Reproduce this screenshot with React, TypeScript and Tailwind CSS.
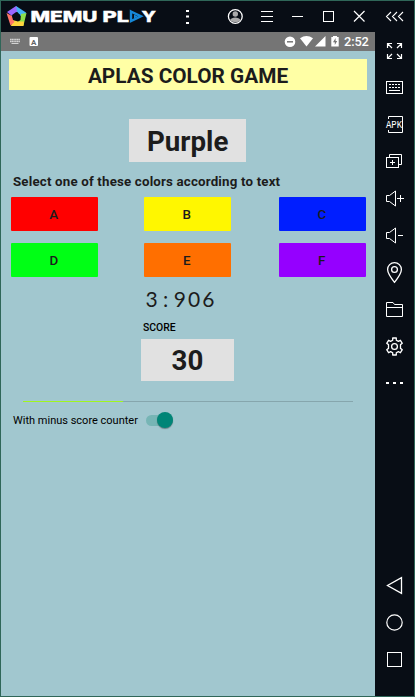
import type { ReactNode } from 'react';

const tools: { name: string; art: ReactNode }[] = [
  {
    name: 'Full screen',
    art: (
      <path
        strokeWidth="1.2"
        d="M12.5 16V11.5H17M12.5 11.5L17 16M22 11.5H26.5V16M26.5 11.5L22 16M12.5 22V26.5H17M12.5 26.5L17 22M22 26.5H26.5V22M26.5 26.5L22 22"
      />
    ),
  },
  {
    name: 'Keyboard',
    art: (
      <>
        <rect x="11.5" y="12.5" width="16" height="12" />
        <path d="M14 15.5H26M14 18.5H26" strokeDasharray="2 1" />
        <path d="M14 21.5H25" />
      </>
    ),
  },
  {
    name: 'Install APK',
    art: (
      <>
        <path d="M13.5 13V10.5H27.5V26.5H13.5V24" />
        <text x="11" y="22" textLength="16" lengthAdjust="spacingAndGlyphs" fill="#fff" stroke="none" fontSize="10.5" fontFamily="Liberation Mono, monospace">
          APK
        </text>
      </>
    ),
  },
  {
    name: 'Instances',
    art: (
      <>
        <path d="M14.5 14V11.5H26.5V21.5H24" />
        <rect x="11.5" y="14.5" width="12" height="10" />
        <path d="M15 19.5H20M17.5 17V22" />
      </>
    ),
  },
  { name: 'Volume up', art: <path d="M11.5 15.5H14.5L20.5 11V26L14.5 21.5H11.5ZM22 18.5H29M25.5 15V22" /> },
  { name: 'Volume down', art: <path d="M11.5 15.5H14.5L20.5 11V26L14.5 21.5H11.5ZM23 18.5H28" /> },
  {
    name: 'Location',
    art: (
      <>
        <path strokeWidth="1.3" d="M19.5 28.3C16.5 24.5 12.6 19.5 12.6 15.5A6.9 6.9 0 0 1 26.4 15.5C26.4 19.5 22.5 24.5 19.5 28.3Z" />
        <circle cx="19.5" cy="15.5" r="2.9" strokeWidth="1.3" />
      </>
    ),
  },
  { name: 'Shared folder', art: <path d="M11.5 25.5V11.5H18L19.5 13.5H27.5V25.5ZM11.5 16.5H27.5" /> },
  {
    name: 'Settings',
    art: (
      <>
        <path
          strokeWidth="1.3"
          strokeLinejoin="round"
          d="M17.700 10H21.300V12.200L23.400 13.400L25.400 12.300L27.300 15.300L25.500 16.600V20.400L27.300 21.700L25.400 24.700L23.400 23.600L21.300 24.800V27H17.700V24.800L15.600 23.600L13.600 24.700L11.700 21.700L13.500 20.400V16.600L11.700 15.300L13.600 12.300L15.600 13.400L17.700 12.200Z"
        />
        <circle cx="19.5" cy="18.5" r="2.9" strokeWidth="1.3" />
      </>
    ),
  },
  { name: 'More', art: <path strokeWidth="2" d="M11 18H14M18 18H21M25 18H28" /> },
];

const navigation: { name: string; art: ReactNode }[] = [
  { name: 'Back', art: <path strokeWidth="1.3" d="M26.5 10.7V26.3L12.5 18.5Z" /> },
  { name: 'Home', art: <circle cx="19.5" cy="18.5" r="7.7" strokeWidth="1.2" /> },
  { name: 'Recents', art: <rect x="12.5" y="11.5" width="14" height="14" /> },
];

const answers = [
  { label: 'A', color: 'bg-[#ff0000]' },
  { label: 'B', color: 'bg-[#fff700]' },
  { label: 'C', color: 'bg-[#001eff]' },
  { label: 'D', color: 'bg-[#00ff15]' },
  { label: 'E', color: 'bg-[#ff6f00]' },
  { label: 'F', color: 'bg-[#9500ff]' },
];

function ToolButton({ name, art }: { name: string; art: ReactNode }) {
  return (
    <button aria-label={name} className="block h-[37px] w-[39px]">
      <svg width="39" height="37" fill="none" stroke="#fff" strokeWidth="1">
        {art}
      </svg>
    </button>
  );
}

function WindowButton({ name, children }: { name: string; children: ReactNode }) {
  return (
    <button aria-label={name} className="h-[31px] w-[31px]">
      <svg width="31" height="31" fill="none" stroke="#fff" strokeWidth="1">
        {children}
      </svg>
    </button>
  );
}

function TitleBar() {
  return (
    <header className="flex h-[31px] shrink-0 bg-[#080d15]">
      <svg width="219" height="31" viewBox="1 1 219 31" className="shrink-0">
        <path d="M16 6L7 12L12 16L17 12L22 12Z" fill="#9b66ff" />
        <path d="M16 6L26 12.5L24.5 17L20.5 16L17 11.5Z" fill="#45b3f5" />
        <path d="M26.5 13L23.5 25.5L17 22.5L20.5 20L21 14Z" fill="#8be04a" />
        <path d="M23.5 26H11L12.5 20L18 21.5L24 21.5Z" fill="#ffd43e" />
        <path d="M10.5 25.5L6.5 13L12 16L13 20L14.5 22Z" fill="#ff7468" />
        <path d="M16.2 12L20.4 15L18.8 20H13.6L12 15Z" fill="#080d15" />
        <g fill="#fff" stroke="#fff" strokeWidth="0.4" fontFamily="Inter, sans-serif" fontWeight="800" fontSize="14.5">
          <text x="30.4" y="21.8" textLength="67" lengthAdjust="spacingAndGlyphs">MEMU</text>
          <text x="102.5" y="21.8" textLength="26.5" lengthAdjust="spacingAndGlyphs">PL</text>
          <text x="141.5" y="21.8" textLength="14.5" lengthAdjust="spacingAndGlyphs">Y</text>
        </g>
        <path d="M131 11.5L141 16.3L131 21.2Z" fill="#080d15" stroke="#1688d8" strokeWidth="2.4" />
        <path d="M134 14.5L138 16.4L134 18.5Z" fill="#1688d8" />
        <path d="M186 11H189M186 16.5H189M186 23H189" stroke="#fff" strokeWidth="2" />
      </svg>
      <WindowButton name="Account">
        <circle cx="15.3" cy="15.5" r="6.9" strokeWidth="1.3" />
        <circle cx="15.3" cy="13" r="2.7" fill="#aaa" stroke="none" />
        <path d="M10 19C11.5 15.5 19 15.5 20.6 19C18.5 22 12.5 22 10 19Z" fill="#aaa" stroke="none" />
      </WindowButton>
      <WindowButton name="Menu">
        <path d="M10 10.5H22M10 15.5H22M10 20.5H22" />
      </WindowButton>
      <WindowButton name="Minimize">
        <path d="M10 15.5H21" />
      </WindowButton>
      <WindowButton name="Maximize">
        <rect x="10.5" y="10.5" width="10" height="10" />
      </WindowButton>
      <WindowButton name="Close">
        <path d="M10 10L20.5 20.5M20.5 10L10 20.5" strokeWidth="1.2" />
      </WindowButton>
      <button aria-label="Collapse" className="h-[31px] w-[39px]">
        <svg width="39" height="31" fill="none" stroke="#fff" strokeWidth="1.1">
          <path d="M16 11L11.5 15.5L16 20M22 11L17.5 15.5L22 20M28 11L23.5 15.5L28 20" />
        </svg>
      </button>
    </header>
  );
}

function StatusBar() {
  return (
    <div className="flex h-[19px] shrink-0 items-center bg-[#757575]">
      <svg width="343" height="19" viewBox="1 32 343 19" className="shrink-0">
        <path d="M10 39.5H20M10 41.5H20" stroke="#d4d4d4" strokeWidth="1.5" strokeDasharray="1.4 .3" />
        <path d="M11.5 43.5H18.5" stroke="#d4d4d4" />
        <rect x="29.5" y="37" width="8.5" height="9" rx="1" fill="#fff" />
        <text x="31" y="44.5" fontFamily="Roboto, sans-serif" fontWeight="700" fontSize="8" fill="#666">A</text>
        <circle cx="290" cy="41.8" r="5.3" fill="#fff" />
        <path d="M287 41.8H293" stroke="#757575" strokeWidth="1.5" />
        <path d="M300 38.3Q306.500 33.800 313 38.300L306.500 46.500Z" fill="#fff" />
        <path d="M325.500 36V46.500H315Z" fill="#fff" />
        <path d="M331.300 37H333V36H337V37H338.700V46.500H331.300Z" fill="#fff" />
        <path d="M335.600 38L333 42.200H334.800V45L337.200 41H335.600Z" fill="#757575" />
      </svg>
      <span className="pt-px text-[12.8px] leading-none font-medium tracking-[-0.1px] text-white">2:52</span>
    </div>
  );
}

export default function App() {
  return (
    <div className="flex h-[697px] w-[415px] flex-col overflow-hidden border border-[#2f6658] font-['Roboto',sans-serif] text-[#1c1c1c]">
      <TitleBar />
      <div className="flex min-h-0 flex-1">
        <div className="flex w-[374px] shrink-0 flex-col bg-[#a1c7cf]">
          <StatusBar />
          <main className="flex flex-col">
            <h1 className="mt-[8px] ml-[8px] flex h-[31px] w-[358px] items-center justify-center bg-[#ffffa5] pt-[3px] text-[20.8px] leading-none font-bold whitespace-nowrap">
              APLAS COLOR GAME
            </h1>
            <div className="mt-[29px] ml-[128.4px] flex h-[43px] w-[116.6px] items-center justify-center bg-[#e1e1e1] pt-[2px] text-[27.7px] leading-none font-bold">
              Purple
            </div>
            <p className="mt-[12px] ml-[12px] h-[16px] text-[13.3px] leading-[16px] font-bold tracking-[0.18px] whitespace-nowrap">
              Select one of these colors according to text
            </p>
            <div className="mt-[7px] ml-[10px] grid w-[354px] grid-cols-[133px_135px_86px] gap-y-[12px]">
              {answers.map((answer) => (
                <button
                  key={answer.label}
                  className={`flex h-[34px] w-[86.5px] items-center justify-center rounded-[1px] pt-[2px] pr-px text-[13.4px] leading-none font-medium ${answer.color}`}
                >
                  {answer.label}
                </button>
              ))}
            </div>
            <div className="mt-[10px] ml-[143.4px] flex h-[24px] font-['Lato',sans-serif] text-[21px] leading-[24px]">
              {'3:906'.split('').map((digit, index) => (
                <span key={index} className="w-[14.2px] text-center">
                  {digit}
                </span>
              ))}
            </div>
            <div className="mt-[11px] ml-[142px] h-[12px] text-[10.4px] leading-[12px] font-medium text-black">SCORE</div>
            <div className="mt-[5px] ml-[140px] flex h-[42px] w-[93px] items-center justify-center bg-[#e1e1e1] pt-[2px] text-[27.7px] leading-none font-bold">
              30
            </div>
            <div className="mt-[20px] ml-[22px] flex h-px w-[330px] bg-[#86a6ad]">
              <div className="h-px w-[100px] bg-[#a0f51e]" />
            </div>
            <div className="mt-[9px] ml-[12px] flex h-[19px] items-center">
              <span className="w-[133px] pt-px text-[11px] whitespace-nowrap text-black">With minus score counter</span>
              <span className="flex h-[11px] w-[27px] items-center justify-end rounded-full bg-[#76b5b5]">
                <span className="mb-px h-[16px] w-[16px] rounded-full bg-[#008577] shadow-[0_1px_1px_rgba(0,0,0,0.35)]" />
              </span>
            </div>
          </main>
        </div>
        <aside className="flex w-[39px] shrink-0 flex-col justify-between bg-[#080d15] pb-[18px]">
          <div>
            {tools.map((tool) => (
              <ToolButton key={tool.name} {...tool} />
            ))}
          </div>
          <div>
            {navigation.map((item) => (
              <ToolButton key={item.name} {...item} />
            ))}
          </div>
        </aside>
      </div>
    </div>
  );
}
